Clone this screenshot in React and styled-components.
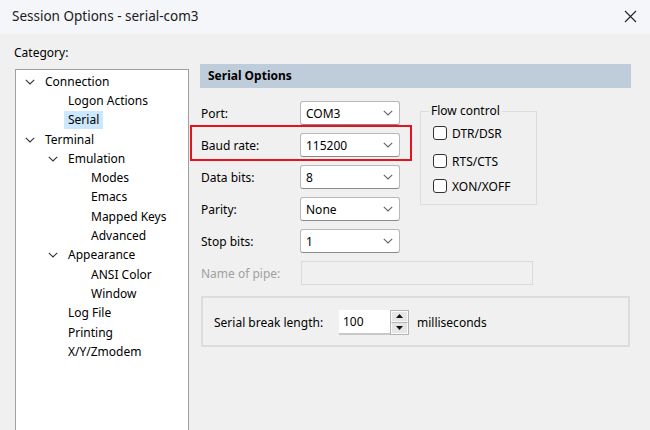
import styled, { createGlobalStyle } from "styled-components";

const GlobalStyle = createGlobalStyle`
    html, body {
        margin: 0;
        padding: 0;
        width: 650px;
        height: 430px;
        overflow: hidden;
        background: #f0f0f0;
    }
    * {
        box-sizing: border-box;
    }
`;

const Window = styled.div`
    width: 650px;
    height: 430px;
    background: #f0f0f0;
    font-family: "Noto Sans", "Open Sans", sans-serif;
    font-size: 12px;
    color: #000;
    display: flex;
    flex-direction: column;
    overflow: hidden;
`;

const TitleBar = styled.div`
    height: 34px;
    flex: none;
    background: #f4f6fa;
    display: flex;
    align-items: center;
    justify-content: space-between;
    padding: 0 12px 2px 12px;
`;

const Title = styled.div`
    font-size: 13.5px;
    color: #1a1a1a;
`;

const CloseButton = styled.div`
    width: 14px;
    height: 14px;
    display: flex;
    align-items: center;
    justify-content: center;
    margin-right: 1px;
`;

const Body = styled.div`
    flex: 1;
    display: flex;
    padding: 11px 0 0 14px;
    min-height: 0;
`;

const CategoryColumn = styled.div`
    width: 175px;
    display: flex;
    flex-direction: column;
`;

const CategoryLabel = styled.div`
    height: 16px;
    line-height: 16px;
    margin-bottom: 8px;
`;

const Tree = styled.div`
    flex: 1;
    margin-left: 1px;
    background: #fff;
    border: 1px solid #a0a0a0;
    border-bottom: none;
    padding-top: 2px;
`;

const TreeRow = styled.div`
    height: 19.3px;
    display: flex;
    align-items: center;
    padding-left: ${(props) => 9 + props.$level * 23}px;
`;

const Toggle = styled.span`
    width: ${(props) => (props.$leaf ? 23 : 20)}px;
    flex: none;
    display: flex;
    align-items: center;
`;

const TreeText = styled.span`
    padding: 0 4px;
    margin-left: -4px;
    height: 18px;
    line-height: 18px;
    background: ${(props) => (props.$selected ? "#cce8ff" : "transparent")};
    white-space: nowrap;
`;

const OptionsPanel = styled.div`
    width: 431px;
    margin: 19px 0 0 11px;
    display: flex;
    flex-direction: column;
`;

const SectionHeader = styled.div`
    height: 24px;
    background: #bfcddb;
    font-weight: bold;
    line-height: 24px;
    padding-left: 8px;
`;

const TopArea = styled.div`
    display: flex;
    align-items: flex-start;
    margin-top: 13px;
`;

const FieldColumn = styled.div`
    display: flex;
    flex-direction: column;
    gap: 8px;
`;

const FieldRow = styled.div`
    position: relative;
    display: flex;
    align-items: center;
    height: 24px;
    padding-left: 1px;
`;

const Highlight = styled.span`
    position: absolute;
    top: -8px;
    bottom: -4px;
    left: -10px;
    right: -12px;
    border: 2px solid #e3141e;
    pointer-events: none;
`;

const FieldLabel = styled.span`
    width: 99px;
    flex: none;
    color: ${(props) => (props.$disabled ? "#a0a0a0" : "#000")};
`;

const Combo = styled.div`
    width: 100px;
    height: 24px;
    background: #fff;
    border: 1px solid #b8b8b8;
    border-bottom-color: #8a8a8a;
    border-radius: 3px;
    display: flex;
    align-items: center;
    justify-content: space-between;
    padding: 0 6px 0 5px;
`;

const FlowGroup = styled.fieldset`
    margin: 3px 0 0 20px;
    width: 117px;
    height: 101px;
    border: 1px solid #dcdcdc;
    padding: 5px 0 0 12px;
    display: flex;
    flex-direction: column;
`;

const Legend = styled.legend`
    padding: 0 2px;
    margin-left: -4px;
    line-height: 14px;
`;

const CheckRow = styled.label`
    display: flex;
    align-items: center;
    height: 20px;
    margin-top: ${(props) => props.$mt}px;
    gap: 5px;
`;

const CheckBox = styled.span`
    width: 14px;
    height: 14px;
    border: 1px solid #333;
    border-radius: 3px;
    background: #fff;
    flex: none;
`;

const PipeRow = styled(FieldRow)`
    margin-top: 8px;
`;

const PipeInput = styled.div`
    width: 232px;
    height: 24px;
    margin-left: 1px;
    border: 1px solid #dadada;
    background: #f0f0f0;
`;

const BreakGroup = styled.div`
    margin: 11px 0 0 1px;
    width: 429px;
    height: 51px;
    border: 2px solid #dcdcdc;
    display: flex;
    align-items: center;
    padding: 1px 0 0 11px;
`;

const BreakLabel = styled.span`
    width: 125px;
`;

const Spinner = styled.div`
    display: flex;
    height: 25px;
`;

const SpinInput = styled.div`
    width: 51px;
    background: #fff;
    border-bottom: 2px solid #c8c8c8;
    padding-left: 4px;
    line-height: 23px;
`;

const SpinButtons = styled.div`
    width: 19px;
    display: flex;
    flex-direction: column;
    border: 1px solid #b4b4b4;
    background: #e6e6e6;
`;

const SpinButton = styled.div`
    flex: 1;
    display: flex;
    align-items: center;
    justify-content: center;
    border: 1px solid #fafafa;
    & + & {
        border-top-color: #b4b4b4;
    }
`;

const Units = styled.span`
    margin-left: 8px;
`;

const ChevronDown = ({ color = "#444", width = 10 }) => (
    <svg width={width} height="6" viewBox="0 0 10 6">
        <path d="M0.8 0.8 L5 5 L9.2 0.8" fill="none" stroke={color} strokeWidth="1.1" />
    </svg>
);

const treeItems = [
    { label: "Connection", level: 0, open: true },
    { label: "Logon Actions", level: 1 },
    { label: "Serial", level: 1, selected: true },
    { label: "Terminal", level: 0, open: true },
    { label: "Emulation", level: 1, open: true },
    { label: "Modes", level: 2 },
    { label: "Emacs", level: 2 },
    { label: "Mapped Keys", level: 2 },
    { label: "Advanced", level: 2 },
    { label: "Appearance", level: 1, open: true },
    { label: "ANSI Color", level: 2 },
    { label: "Window", level: 2 },
    { label: "Log File", level: 1 },
    { label: "Printing", level: 1 },
    { label: "X/Y/Zmodem", level: 1 },
];

const fields = [
    { label: "Port:", value: "COM3" },
    { label: "Baud rate:", value: "115200", marked: true },
    { label: "Data bits:", value: "8" },
    { label: "Parity:", value: "None" },
    { label: "Stop bits:", value: "1" },
];

const flowOptions = [
    { label: "DTR/DSR", mt: 0 },
    { label: "RTS/CTS", mt: 8 },
    { label: "XON/XOFF", mt: 5 },
];

const App = () => {
    return (
        <Window>
            <GlobalStyle />
            <TitleBar>
                <Title>Session Options - serial-com3</Title>
                <CloseButton>
                    <svg width="13" height="13" viewBox="0 0 13 13">
                        <path d="M1 1 L12 12 M12 1 L1 12" stroke="#222" strokeWidth="1.1" />
                    </svg>
                </CloseButton>
            </TitleBar>
            <Body>
                <CategoryColumn>
                    <CategoryLabel>Category:</CategoryLabel>
                    <Tree>
                        {treeItems.map((item, i) => (
                            <TreeRow key={`tree-${i}`} $level={item.open ? item.level : item.level - 1}>
                                <Toggle>{item.open && <ChevronDown color="#333" />}</Toggle>
                                {!item.open && <Toggle $leaf />}
                                <TreeText $selected={item.selected}>{item.label}</TreeText>
                            </TreeRow>
                        ))}
                    </Tree>
                </CategoryColumn>
                <OptionsPanel>
                    <SectionHeader>Serial Options</SectionHeader>
                    <TopArea>
                        <FieldColumn>
                            {fields.map((f) => (
                                <FieldRow key={f.label}>
                                    {f.marked && <Highlight />}
                                    <FieldLabel>{f.label}</FieldLabel>
                                    <Combo>
                                        <span>{f.value}</span>
                                        <ChevronDown color="#666" />
                                    </Combo>
                                </FieldRow>
                            ))}
                        </FieldColumn>
                        <FlowGroup>
                            <Legend>Flow control</Legend>
                            {flowOptions.map((o) => (
                                <CheckRow key={o.label} $mt={o.mt}>
                                    <CheckBox />
                                    {o.label}
                                </CheckRow>
                            ))}
                        </FlowGroup>
                    </TopArea>
                    <PipeRow>
                        <FieldLabel $disabled>Name of pipe:</FieldLabel>
                        <PipeInput />
                    </PipeRow>
                    <BreakGroup>
                        <BreakLabel>Serial break length:</BreakLabel>
                        <Spinner>
                            <SpinInput>100</SpinInput>
                            <SpinButtons>
                                <SpinButton>
                                    <svg width="7" height="4" viewBox="0 0 7 4">
                                        <path d="M0 4 L3.5 0 L7 4 Z" fill="#111" />
                                    </svg>
                                </SpinButton>
                                <SpinButton>
                                    <svg width="7" height="4" viewBox="0 0 7 4">
                                        <path d="M0 0 L3.5 4 L7 0 Z" fill="#111" />
                                    </svg>
                                </SpinButton>
                            </SpinButtons>
                        </Spinner>
                        <Units>milliseconds</Units>
                    </BreakGroup>
                </OptionsPanel>
            </Body>
        </Window>
    );
};

export default App;
